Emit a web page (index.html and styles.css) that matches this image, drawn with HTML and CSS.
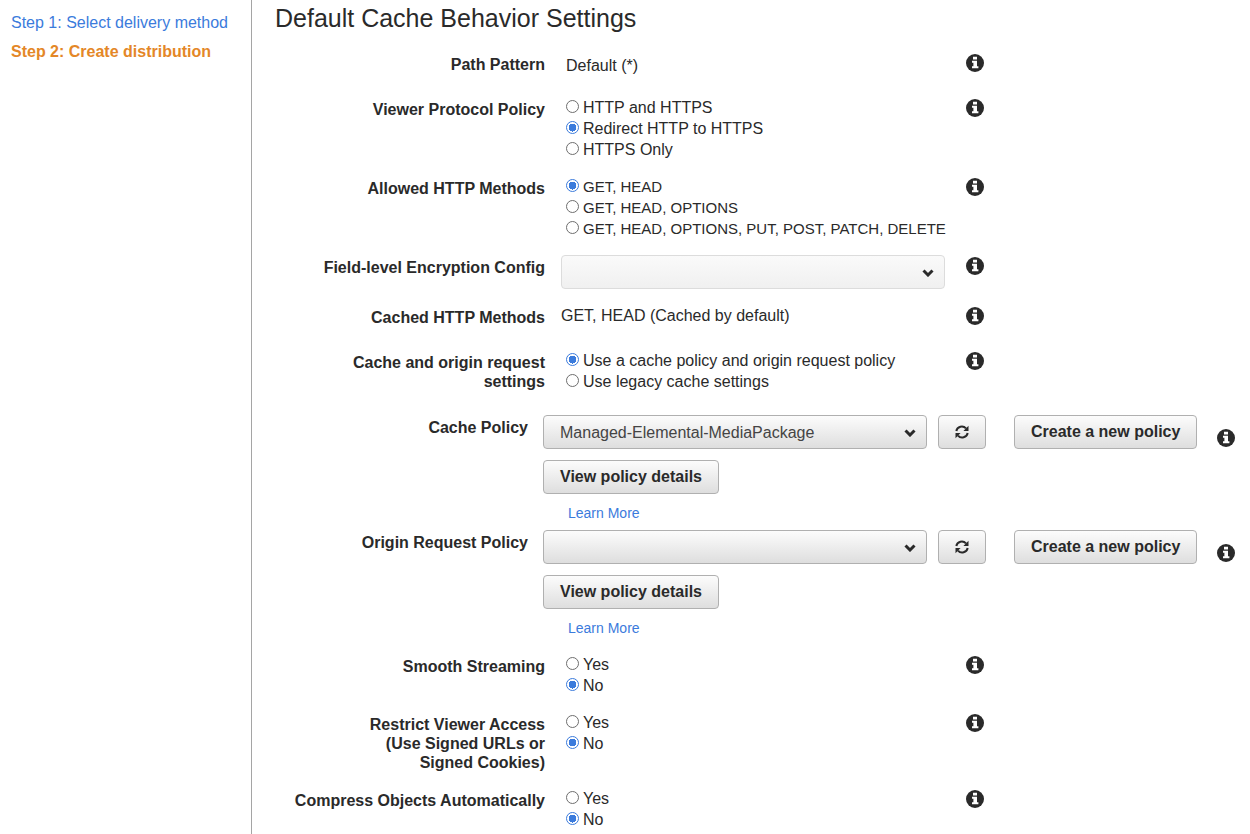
FILE: index.html
```html
<!DOCTYPE html>
<html lang="en">
<head>
<meta charset="utf-8">
<title>Create distribution</title>
<link rel="stylesheet" href="styles.css">
</head>
<body>
<svg class="sprite" aria-hidden="true">
  <symbol id="info" viewBox="0 0 18 18">
    <circle cx="9" cy="9" r="9" fill="#2a2a2a"/>
    <path d="M7 2.800h4v2.700H7zM6 6.800h5v5.400h1.400v2H6v-2h1.400V8.800H6z" fill="#fff"/>
  </symbol>
  <symbol id="refresh" viewBox="0 0 14 14">
    <path d="M1.300 6A5.600 5.600 0 0 1 11 3.400M12.700 8A5.600 5.600 0 0 1 3 10.600" fill="none" stroke="#2a2a2a" stroke-width="2"/>
    <path d="M13.500.8V6H8.400zM.5 13.200V8h5.100z" fill="#2a2a2a"/>
  </symbol>
</svg>
<div class="page">
  <nav class="steps">
    <a class="step" href="#">Step 1: Select delivery method</a>
    <a class="step current" href="#" aria-current="step">Step 2: Create distribution</a>
  </nav>
  <main class="main">
    <h1 class="title">Default Cache Behavior Settings</h1>
    <form class="form">
      <div class="row">
        <div class="label">Path Pattern</div>
        <div class="field inset">Default (*)</div>
        <svg class="info"><use href="#info"/></svg>
      </div>
      <div class="row" role="radiogroup" aria-labelledby="l-viewer">
        <div class="label" id="l-viewer">Viewer Protocol Policy</div>
        <div class="field options">
          <label class="option"><input type="radio" name="viewer">HTTP and HTTPS</label>
          <label class="option"><input type="radio" name="viewer" checked>Redirect HTTP to HTTPS</label>
          <label class="option"><input type="radio" name="viewer">HTTPS Only</label>
        </div>
        <svg class="info"><use href="#info"/></svg>
      </div>
      <div class="row" role="radiogroup" aria-labelledby="l-methods">
        <div class="label" id="l-methods">Allowed HTTP Methods</div>
        <div class="field options methods">
          <label class="option"><input type="radio" name="methods" checked>GET, HEAD</label>
          <label class="option"><input type="radio" name="methods">GET, HEAD, OPTIONS</label>
          <label class="option"><input type="radio" name="methods">GET, HEAD, OPTIONS, PUT, POST, PATCH, DELETE</label>
        </div>
        <svg class="info"><use href="#info"/></svg>
      </div>
      <div class="row">
        <label class="label" for="encryption">Field-level Encryption Config</label>
        <div class="field"><div class="picker pale"><select id="encryption"><option></option></select><svg class="chevron" viewBox="0 0 12 8"><path d="M1.500 1.500 6 6l4.500-4.500"/></svg></div></div>
        <svg class="info"><use href="#info"/></svg>
      </div>
      <div class="row">
        <div class="label">Cached HTTP Methods</div>
        <div class="field">GET, HEAD (Cached by default)</div>
        <svg class="info"><use href="#info"/></svg>
      </div>
      <div class="row" role="radiogroup" aria-labelledby="l-settings">
        <div class="label" id="l-settings">Cache and origin request settings</div>
        <div class="field options">
          <label class="option"><input type="radio" name="settings" checked>Use a cache policy and origin request policy</label>
          <label class="option"><input type="radio" name="settings">Use legacy cache settings</label>
        </div>
        <svg class="info"><use href="#info"/></svg>
      </div>
      <div class="policies">
        <div class="policy">
          <label class="label" for="cache-policy">Cache Policy</label>
          <div class="policy-body">
            <div class="policy-bar">
              <div class="picker"><select id="cache-policy"><option>Managed-Elemental-MediaPackage</option></select><svg class="chevron" viewBox="0 0 12 8"><path d="M1.500 1.500 6 6l4.500-4.500"/></svg></div>
              <button class="button icon-button" type="button" aria-label="Refresh"><svg class="refresh"><use href="#refresh"/></svg></button>
              <button class="button create" type="button">Create a new policy</button>
              <svg class="info"><use href="#info"/></svg>
            </div>
            <button class="button" type="button">View policy details</button>
            <a class="learn" href="#">Learn More</a>
          </div>
        </div>
        <div class="policy">
          <label class="label" for="origin-policy">Origin Request Policy</label>
          <div class="policy-body">
            <div class="policy-bar">
              <div class="picker"><select id="origin-policy"><option></option></select><svg class="chevron" viewBox="0 0 12 8"><path d="M1.500 1.500 6 6l4.500-4.500"/></svg></div>
              <button class="button icon-button" type="button" aria-label="Refresh"><svg class="refresh"><use href="#refresh"/></svg></button>
              <button class="button create" type="button">Create a new policy</button>
              <svg class="info"><use href="#info"/></svg>
            </div>
            <button class="button" type="button">View policy details</button>
            <a class="learn" href="#">Learn More</a>
          </div>
        </div>
      </div>
      <div class="row" role="radiogroup" aria-labelledby="l-smooth">
        <div class="label" id="l-smooth">Smooth Streaming</div>
        <div class="field options">
          <label class="option"><input type="radio" name="smooth">Yes</label>
          <label class="option"><input type="radio" name="smooth" checked>No</label>
        </div>
        <svg class="info"><use href="#info"/></svg>
      </div>
      <div class="row" role="radiogroup" aria-labelledby="l-restrict">
        <div class="label" id="l-restrict">Restrict Viewer Access<br>(Use Signed URLs or<br>Signed Cookies)</div>
        <div class="field options">
          <label class="option"><input type="radio" name="restrict">Yes</label>
          <label class="option"><input type="radio" name="restrict" checked>No</label>
        </div>
        <svg class="info"><use href="#info"/></svg>
      </div>
      <div class="row" role="radiogroup" aria-labelledby="l-compress">
        <div class="label" id="l-compress">Compress Objects Automatically</div>
        <div class="field options">
          <label class="option"><input type="radio" name="compress">Yes</label>
          <label class="option"><input type="radio" name="compress" checked>No</label>
        </div>
        <svg class="info"><use href="#info"/></svg>
      </div>
    </form>
  </main>
</div>
</body>
</html>
```
FILE: styles.css
```css
* { box-sizing: border-box; }

body {
  margin: 0;
  background: #fff;
  color: #2a2a2a;
  font: 16px/21px "Liberation Sans", Arial, sans-serif;
}

.sprite { display: none; }

.page {
  display: flex;
  min-height: 100vh;
}

.steps {
  flex: none;
  width: 252px;
  padding: 12px 11px;
  border-right: 1px solid #a5a5a5;
  display: flex;
  flex-direction: column;
  gap: 8px;
}

.step {
  color: #3b7bdc;
  text-decoration: none;
  white-space: nowrap;
}

.step.current {
  color: #e48727;
  font-weight: bold;
}

.main {
  flex: 1;
  min-width: 0;
  padding: 4px 8px 0 23px;
}

.title {
  margin: 0 0 20px;
  font-size: 25px;
  line-height: 28px;
  font-weight: normal;
}

.form {
  display: flex;
  flex-direction: column;
  gap: 16px;
}

.row {
  display: grid;
  grid-template-columns: 270px minmax(0, 389px) 18px;
  column-gap: 16px;
  min-height: 29px;
}

.label {
  padding-top: 3px;
  font-weight: bold;
  line-height: 19px;
  text-align: right;
}

.row .label { padding-left: 16px; }

.inset { padding: 3px 5px; }

.options {
  display: flex;
  flex-direction: column;
  padding-left: 5px;
}

.methods { font-size: 15px; }

.option {
  display: flex;
  align-items: center;
  gap: 4px;
  white-space: nowrap;
}

input[type="radio"] {
  appearance: none;
  flex: none;
  width: 13px;
  height: 13px;
  margin: 0 0 2px;
  border: 1px solid #6e6e6e;
  border-radius: 50%;
  background: #fff;
}

input[type="radio"]:checked {
  border-color: #3b7bdc;
  background: radial-gradient(circle, #3b7bdc 4px, #fff 4px);
}

.info {
  flex: none;
  width: 18px;
  height: 18px;
  margin-top: 2px;
}

.picker {
  position: relative;
  width: 384px;
}

select {
  appearance: none;
  display: block;
  width: 100%;
  height: 34px;
  padding: 0 40px 0 16px;
  border: 1px solid #b0b0b0;
  border-radius: 4px;
  background: linear-gradient(#fcfcfc, #dedede);
  color: #444;
  font: inherit;
}

.pale select {
  border-color: #dcdcdc;
  background: linear-gradient(#fafafa, #f0f0f0);
}

.chevron {
  position: absolute;
  right: 11px;
  top: 14px;
  width: 12px;
  height: 8px;
  fill: none;
  stroke: #2a2a2a;
  stroke-width: 3;
  pointer-events: none;
}

.policies {
  display: flex;
  flex-direction: column;
  gap: 7px;
  margin-top: 7px;
}

.policy {
  display: grid;
  grid-template-columns: 253px minmax(0, 1fr);
  column-gap: 15px;
}

.policy-body {
  display: flex;
  flex-direction: column;
  align-items: flex-start;
}

.policy-bar {
  display: flex;
  align-items: flex-start;
  gap: 11px;
  margin-bottom: 11px;
}

.policy-bar .info { margin: 14px 0 0 9px; }

.button {
  height: 34px;
  padding: 0 16px;
  border: 1px solid #b0b0b0;
  border-radius: 4px;
  background: linear-gradient(#fcfcfc, #dedede);
  color: #2a2a2a;
  font: bold 16px/20px "Liberation Sans", Arial, sans-serif;
  white-space: nowrap;
}

.icon-button { width: 48px; }

.create { margin-left: 17px; }

.refresh {
  display: block;
  width: 14px;
  height: 14px;
  margin: 0 auto;
}

.learn {
  margin: 9px 0 0 25px;
  color: #3b7bdc;
  font-size: 14px;
  line-height: 20px;
  text-decoration: none;
}
```
